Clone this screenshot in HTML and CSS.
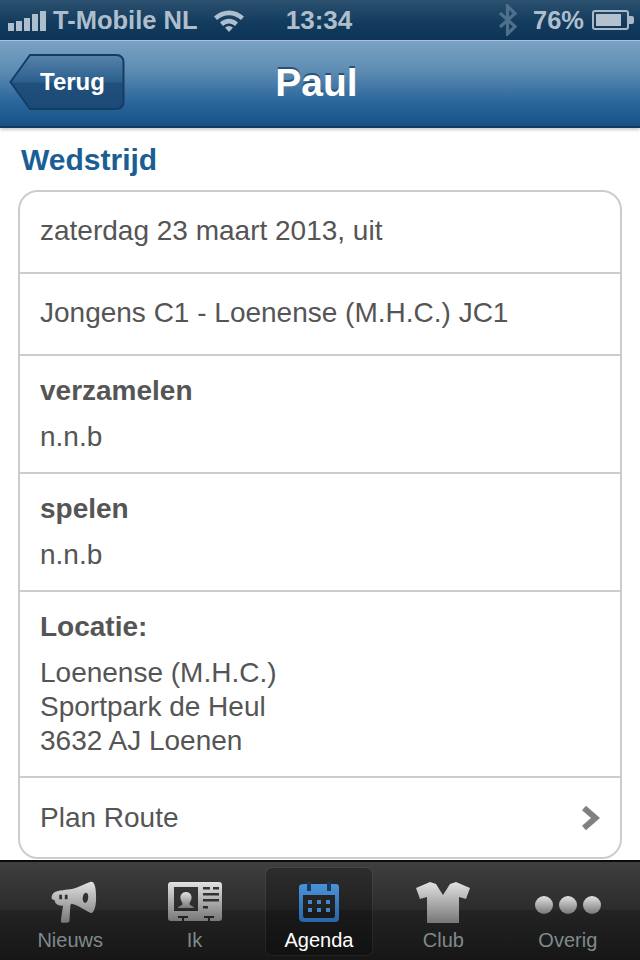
FILE: index.html
```html
<!DOCTYPE html>
<html lang="nl">
<head>
<meta charset="UTF-8">
<meta name="viewport" content="width=device-width, initial-scale=1.0">
<title>Paul</title>
<link rel="stylesheet" href="styles.css">
</head>
<body>
<div class="statusbar">
    <div class="status-left">
        <svg class="signal" width="38" height="20" viewBox="0 0 38 20">
            <rect x="0" y="12" width="6" height="8"/>
            <rect x="8" y="10" width="6" height="10"/>
            <rect x="16" y="7" width="6" height="13"/>
            <rect x="24" y="3" width="6" height="17"/>
            <rect x="32" y="0" width="6" height="20"/>
        </svg>
        <span class="carrier">T-Mobile NL</span>
        <svg class="wifi" width="32" height="24" viewBox="0 0 32 24">
            <path d="M1 8.500C9.500 .5 22.500 .5 31 8.500L28 12C21 5.500 11 5.500 4 12Z"/>
            <path d="M7 14.500C12.500 9.500 19.500 9.500 25 14.500L22 18C18.500 14.500 13.500 14.500 10 18Z"/>
            <path d="M12 19.500C14.500 17.500 17.500 17.500 20 19.500L16 24Z"/>
        </svg>
    </div>
    <div class="status-time">13:34</div>
    <div class="status-right">
        <svg class="bluetooth" width="20" height="32" viewBox="0 0 20 32">
            <path d="M2 9L17 22.500L9.500 30V2L17 9.500L2 23" fill="none" stroke="#4f6f8b" stroke-width="3.200"/>
        </svg>
        <span class="percent">76%</span>
        <svg class="battery" width="42" height="20" viewBox="0 0 42 20">
            <rect x="1" y="1" width="35" height="18" rx="2" fill="none" stroke="#a9b9c8" stroke-width="2"/>
            <rect x="4" y="4" width="25" height="12" fill="#b4c2cf"/>
            <path d="M37 6h3a2 2 0 0 1 2 2v4a2 2 0 0 1-2 2h-3z" fill="#a9b9c8"/>
        </svg>
    </div>
</div>

<nav class="navbar">
    <svg class="back" width="116" height="60" viewBox="0 1 116 60">
        <defs>
            <linearGradient id="backfill" x1="0" y1="0" x2="0" y2="1">
                <stop offset="0" stop-color="#5583ab"/>
                <stop offset="0.5" stop-color="#2c5f8d"/>
                <stop offset="0.52" stop-color="#214f7b"/>
                <stop offset="1" stop-color="#1b4a76"/>
            </linearGradient>
        </defs>
        <path d="M1.500 30L21 3H107Q114.500 3 114.500 10.500V49.500Q114.500 57 107 57H21Z" fill="url(#backfill)" stroke="#143d66" stroke-width="2"/>
        <text class="back-label" x="31" y="38">Terug</text>
    </svg>
    <h1>Paul</h1>
    <div></div>
</nav>

<main class="content">
    <h2>Wedstrijd</h2>
    <div class="card">
        <div class="row row-single">zaterdag 23 maart 2013, uit</div>
        <div class="row row-single">Jongens C1 - Loenense (M.H.C.) JC1</div>
        <div class="row">
            <strong>verzamelen</strong>
            <p>n.n.b</p>
        </div>
        <div class="row">
            <strong>spelen</strong>
            <p>n.n.b</p>
        </div>
        <div class="row row-location">
            <strong>Locatie:</strong>
            <p>Loenense (M.H.C.)<br>Sportpark de Heul<br>3632 AJ Loenen</p>
        </div>
        <div class="row row-link">
            <span>Plan Route</span>
            <svg width="20" height="26" viewBox="0 0 20 26">
                <path d="M4 3L15.500 13L4 23" fill="none" stroke="#808080" stroke-width="6"/>
            </svg>
        </div>
    </div>
</main>

<footer class="tabbar">
    <div class="tab">
        <svg class="icon-news" width="46" height="46" viewBox="0 -2 50 50">
            <defs>
                <linearGradient id="grey" x1="0" y1="0" x2="0" y2="1">
                    <stop offset="0" stop-color="#e2e2e2"/>
                    <stop offset="1" stop-color="#777"/>
                </linearGradient>
            </defs>
            <path fill-rule="evenodd" fill="url(#grey)" d="M3 13C8 10 18 10 23 9C30 7 37 3 43 1C48 0 49 9 49 19C49 29 46 36 43 35C36 32 31 27 22 25L21 27L20 44C20 46 12 46 11 45C10 44 13 30 13 27C8 27 4 25 4 21L1 20C0 18 1 15 3 13ZM9 15V20H12V15ZM15 15V20H18V15ZM38 13C34 13 33 23 37 24C41 24 42 13 38 13Z"/>
        </svg>
        <span>Nieuws</span>
    </div>
    <div class="tab">
        <svg width="56" height="46" viewBox="0 0 56 46">
            <path fill-rule="evenodd" fill="url(#grey)" d="M4 3H52Q55 3 55 6V39Q55 42 52 42H43V39H47V37H37V39H41V42H17V39H21V37H11V39H15V42H4Q1 42 1 39V6Q1 3 4 3ZM7 8V32H31V8ZM36 8V10.500H43V8ZM46 8V10.500H52V8ZM36 14V16.500H52V14ZM36 20V22.500H52V20ZM36 27V29.500H41V27Z"/>
            <path fill="url(#grey)" d="M19 13C23 13 25 16 24.500 19.500C24 22 22.500 23.500 22.500 25C23 27 27 27 27 29H11C11 27 15 27 15.500 25C15.500 23.500 14 22 13.500 19.500C13 16 15 13 19 13Z"/>
        </svg>
        <span>Ik</span>
    </div>
    <div class="tab tab-active">
        <svg width="42" height="46" viewBox="0 -2 42 46">
            <defs>
                <linearGradient id="blue" x1="0" y1="0" x2="0" y2="1">
                    <stop offset="0" stop-color="#4a93d8"/>
                    <stop offset="1" stop-color="#2766a6"/>
                </linearGradient>
            </defs>
            <path fill-rule="evenodd" fill="url(#blue)" d="M6 3H38Q41 3 41 6V37Q41 41 37 41H6Q1 41 1 37V6Q1 3 6 3ZM5 14V35Q5 37 7 37H35Q37 37 37 35V14Z"/>
            <path fill="#1b3a5c" d="M9 1h4v9H9zM29 1h4v9h-4z"/>
            <path fill="#3f86cc" d="M10 19h4v4h-4zM19 19h4v4h-4zM28 19h4v4h-4zM10 27h4v4h-4zM19 27h4v4h-4zM28 27h4v4h-4z"/>
        </svg>
        <span>Agenda</span>
    </div>
    <div class="tab">
        <svg width="56" height="46" viewBox="0 -2 56 46">
            <path fill="url(#grey)" d="M15 1L21 3C24 8 27 12 28 14C29 12 32 8 35 3L41 1L55 7L51 18L44 16V42H12V16L5 18L1 7Z"/>
        </svg>
        <span>Club</span>
    </div>
    <div class="tab">
        <svg width="68" height="46" viewBox="0 0 68 46">
            <circle cx="10" cy="26" r="9" fill="url(#grey)"/>
            <circle cx="34" cy="26" r="9" fill="url(#grey)"/>
            <circle cx="58" cy="26" r="9" fill="url(#grey)"/>
        </svg>
        <span>Overig</span>
    </div>
</footer>
</body>
</html>
```

FILE: styles.css
```css
html, body {
    margin: 0;
    padding: 0;
}
body {
    width: 640px;
    height: 960px;
    overflow: hidden;
    display: flex;
    flex-direction: column;
    background: #fff;
    font-family: 'Liberation Sans', Arial, sans-serif;
}
.statusbar {
    height: 40px;
    box-sizing: border-box;
    padding: 0 6px 0 8px;
    display: grid;
    grid-template-columns: 1fr auto 1fr;
    align-items: center;
    background: linear-gradient(#2c5170, #113a5c 60%, #0e3557);
    color: #afbecc;
    font-size: 25.5px;
    font-weight: bold;
}
.status-left, .status-right {
    display: flex;
    align-items: center;
}
.status-right {
    justify-content: flex-end;
}
.signal {
    fill: #afbecc;
    margin-top: 1px;
}
.carrier {
    margin-left: 7px;
}
.wifi {
    fill: #afbecc;
    margin-left: 16px;
}
.status-time {
    font-size: 26px;
    padding-right: 4px;
}
.bluetooth {
    margin-right: 15px;
}
.percent {
    margin-right: 8px;
}
.navbar {
    height: 88px;
    box-sizing: border-box;
    border-top: 1px solid #a9c2d8;
    border-bottom: 2px solid #113a5e;
    padding: 0 16px 2px 9px;
    display: grid;
    grid-template-columns: 1fr auto 1fr;
    align-items: center;
    background: linear-gradient(#7aa2c2, #5d8cb3 35%, #2a659b 72%, #175286);
    box-shadow: 0 2px 3px rgba(0,0,0,0.2);
}
.navbar h1 {
    margin: 0;
    font-size: 39px;
    color: #fff;
    text-shadow: 0 -2px 0 #2c4f72;
}
.back-label {
    font-size: 24px;
    font-weight: bold;
    fill: #fff;
}
.content {
    flex: 1;
    padding: 15px 18px 0;
    color: #555;
    font-size: 28px;
}
.content h2 {
    margin: 0 0 13px 3px;
    font-size: 30px;
    line-height: 34px;
    color: #1b5e95;
}
.card {
    border: 2px solid #ccc;
    border-radius: 20px;
    background: #fff;
}
.row {
    padding: 18px 20px 0;
    border-bottom: 2px solid #ccc;
    height: 98px;
    line-height: 34px;
}
.row strong {
    display: block;
}
.row p {
    margin: 12px 0 0;
}
.row-single {
    height: 58px;
    padding-top: 22px;
}
.row-location {
    height: 166px;
}
.row-link {
    height: 79px;
    padding-top: 0;
    border-bottom: none;
    display: flex;
    align-items: center;
    justify-content: space-between;
}
.tabbar {
    height: 100px;
    box-sizing: border-box;
    border-top: 2px solid #0b0b0b;
    padding: 6px 10px 4px 8px;
    display: grid;
    grid-template-columns: repeat(5, 1fr);
    background: linear-gradient(#3f3f3f, #2c2c2c 48%, #232323 50%, #161616);
}
.tab {
    display: flex;
    flex-direction: column;
    align-items: center;
    justify-content: flex-end;
    padding-bottom: 3px;
    color: #7f8a8d;
    font-size: 20px;
    line-height: 26px;
    border-radius: 6px;
}
.tab svg {
    margin-bottom: 2px;
}
.icon-news {
    margin-left: 8px;
}
.tab-active {
    color: #fff;
    margin: 0 9px 1px;
    background: rgba(0,0,0,0.25);
    box-shadow: 0 0 0 1px rgba(255,255,255,0.05);
}
.tab-active span {
    margin-bottom: -1px;
}
```
